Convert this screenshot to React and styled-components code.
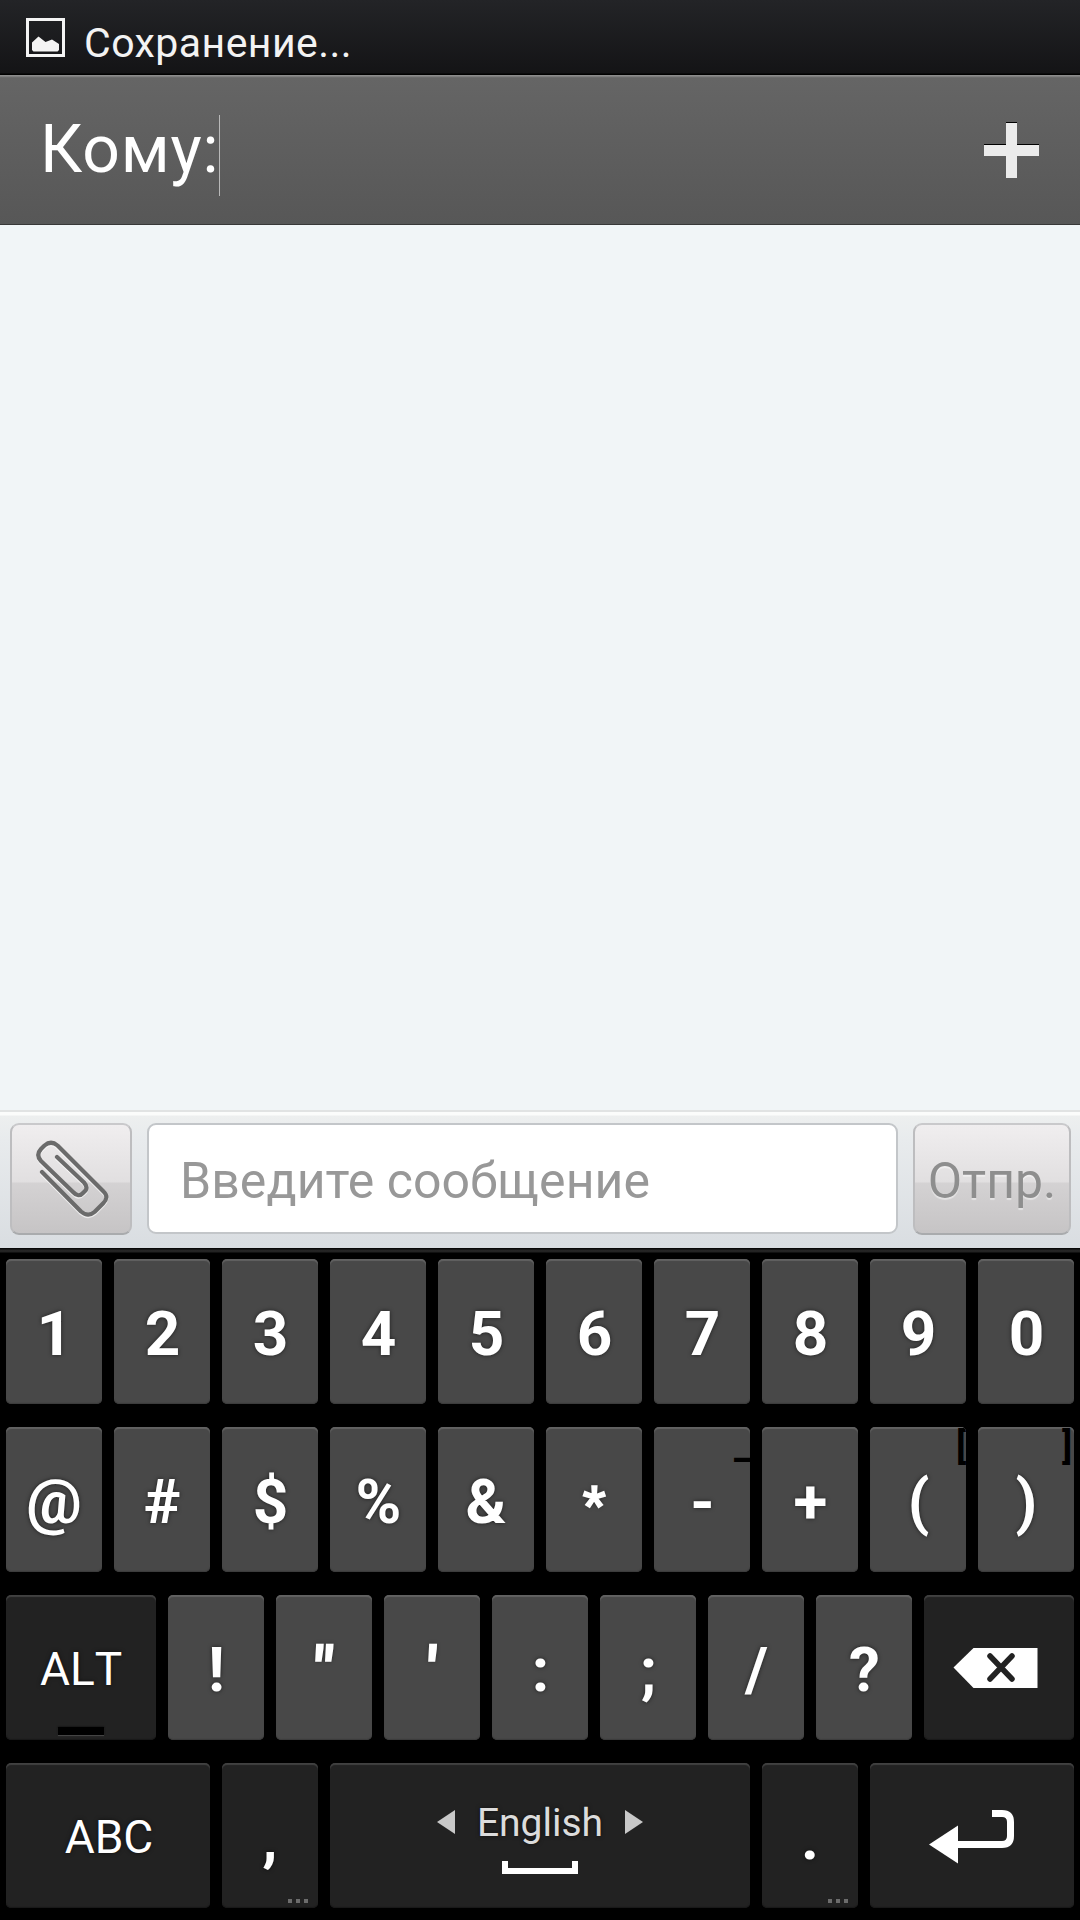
import React from 'react';
import styled, { createGlobalStyle } from 'styled-components';

const GlobalStyle = createGlobalStyle`
  * { box-sizing: border-box; }
  body { margin: 0; background: #000; }
`;

const Screen = styled.div`
  width: 1080px;
  height: 1920px;
  display: flex;
  flex-direction: column;
  overflow: hidden;
  background: #000;
  font-family: Roboto, 'Noto Sans', sans-serif;
`;

const StatusBar = styled.header`
  flex: none;
  height: 75px;
  display: flex;
  align-items: flex-start;
  padding: 18px 0 0 26px;
  background: linear-gradient(#232427, #141416 73px, #000 74px);
`;

const StatusText = styled.span`
  margin-left: 19px;
  color: #f3f3f3;
  font-size: 41px;
  line-height: 50px;
  letter-spacing: 0.45px;
`;

const RecipientBar = styled.section`
  flex: none;
  height: 150px;
  display: flex;
  align-items: center;
  justify-content: space-between;
  padding: 0 41px 0 40px;
  background: linear-gradient(#8b8b8b 0, #8b8b8b 1px, #707070 2px, #656565 3px, #575757 149px, #383838 149px);
`;

const RecipientField = styled.div`
  display: flex;
  align-items: center;
  height: 81px;
  margin-top: 11px;
  color: #fff;
  font-size: 66px;
  line-height: 70px;
  letter-spacing: 0.8px;
`;

const RecipientText = styled.span`
  display: block;
  height: 81px;
`;

const Caret = styled.i`
  width: 1px;
  height: 81px;
  background: #b9b9b9;
`;

const Conversation = styled.main`
  flex: 1;
  background: #f1f5f7;
`;

const Composer = styled.section`
  flex: none;
  height: 138px;
  display: flex;
  gap: 15px;
  padding: 13px 9px 0 10px;
  background: linear-gradient(#e1e3e3 0, #e1e3e3 2px, #fbfcfb 2px, #fbfcfb 5px, #edefef 6px, #e8ebed 30px, #d9dde1);
`;

const ComposerButton = styled.button`
  flex: none;
  width: ${(p) => p.$width}px;
  height: 112px;
  margin: 0;
  padding: ${(p) => p.$padding || 0};
  display: flex;
  align-items: center;
  justify-content: center;
  border: 2px solid;
  border-color: #c9c9cb #bdbdbf #a9abad;
  border-radius: 9px;
  background: linear-gradient(#f0eeef 0, #e1dfe0 57px, #d4d2d3 58px, #c6c4c5 100%);
  color: #8e8e8e;
  font: 400 50px/60px Roboto, 'Noto Sans', sans-serif;
  text-shadow: 0 2px 1px rgba(255, 255, 255, 0.45);
`;

const MessageField = styled.div`
  flex: 1;
  height: 111px;
  padding-left: 31px;
  border: 2px solid #c3c6c9;
  border-radius: 9px;
  background: #fff;
  color: #989898;
  font-size: 50px;
  line-height: 113px;
  letter-spacing: 0.05px;
  white-space: nowrap;
`;

const Keyboard = styled.section`
  flex: none;
  height: 672px;
  display: flex;
  flex-direction: column;
  gap: 23px;
  padding: 11px 6px 0;
  background: linear-gradient(#080808 0, #080808 1px, #252525 2px, #222 4px, #000 5px);
`;

const KeyRow = styled.div`
  display: flex;
  gap: 12px;
`;

const Key = styled.div`
  position: relative;
  flex: none;
  width: ${(p) => p.$width || 96}px;
  height: 145px;
  border-radius: 5px;
  overflow: hidden;
  background: ${(p) => (p.$dark ? '#222' : '#484848')};
  box-shadow: inset 0 2px 1px ${(p) => (p.$dark ? '#414141' : '#626262')},
    inset 0 -1px 1px ${(p) => (p.$dark ? '#191919' : '#3b3b3b')};
  color: #fff;
  text-align: center;
  text-shadow: 0 0 4px rgba(0, 0, 0, 0.6);
`;

const Glyph = styled.span`
  display: block;
  padding-left: ${(p) => (p.$centered ? 0 : 1)}px;
  font-size: ${(p) => p.$size || 62}px;
  font-weight: 700;
  line-height: ${(p) => p.$line || 150}px;
  -webkit-text-stroke: ${(p) => p.$stroke || 0}px #fff;
`;

const QuoteGlyph = styled(Glyph)`
  padding: 0 1px 0 0;
  transform: skewX(-3deg);
`;

const ModeLabel = styled.span`
  display: block;
  padding-left: ${(p) => p.$shift || 0}px;
  font-size: 46px;
  font-kerning: none;
  line-height: 149px;
`;

const CornerHint = styled.span`
  position: absolute;
  top: ${(p) => p.$top}px;
  left: ${(p) => p.$left}px;
  color: #000;
  font-size: ${(p) => p.$size}px;
  font-weight: 700;
  line-height: 46px;
  text-shadow: none;
`;

const AltLight = styled.i`
  position: absolute;
  left: 52px;
  bottom: 5px;
  width: 46px;
  height: 8px;
  background: #000;
  box-shadow: 0 1px 1px #444, 0 0 2px #000;
`;

const MoreDots = styled.i`
  position: absolute;
  right: 10px;
  bottom: 5px;
  display: flex;
  gap: 4px;

  &::before,
  &::after,
  & > b {
    content: '';
    width: 4px;
    height: 4px;
    background: #6c6c6c;
  }
`;

const SpaceContent = styled.div`
  height: 145px;
  display: flex;
  flex-direction: column;
  align-items: center;
  padding-top: 34px;
`;

const Language = styled.div`
  display: flex;
  align-items: center;
  gap: 22px;
`;

const LanguageName = styled.span`
  padding-top: 3px;
  color: #dcdcdc;
  font-size: 39px;
  line-height: 46px;
`;

const SpaceMark = styled.i`
  width: 76px;
  height: 13px;
  margin-top: 15px;
  border: solid #fff;
  border-width: 0 6px 6px;
`;

const KeyIcon = styled.div`
  height: 145px;
  display: flex;
  align-items: flex-start;
  justify-content: center;
  padding: ${(p) => p.$top}px ${(p) => p.$right || 0}px 0 0;
`;

const PictureIcon = () => (
  <svg width="39" height="39" viewBox="0 0 39 39">
    <rect x="1.5" y="1.5" width="36" height="36" fill="none" stroke="#f4f4f4" strokeWidth="3" />
    <path d="M6 32V24.500L12.500 18.500L19.500 24L26 21.500L33 26V32L31.500 33.500H7.500Z" fill="#f4f4f4" />
  </svg>
);

const PlusIcon = () => (
  <svg width="55" height="57" viewBox="0 0 55 57" shapeRendering="crispEdges">
    <path d="M22 0H33V22H55V24H0V22H22Z" fill="#000" />
    <path d="M22 1H33V23H55V34H33V56H22V34H0V23H22Z" fill="#ebebeb" />
  </svg>
);

const clipPath =
  'M5 31L44 70.500Q51 76.500 57.500 71L66 62.500Q72.500 56 66.500 50.500L20.500 4.500Q14 -1 7.500 4.500L4 8Q-1.500 14 4 20L36 51Q41.500 57 46 52L48.500 49.500Q51 46 47 41.500L20 16';

const PaperclipIcon = () => (
  <svg width="76" height="80" viewBox="-2 -2 76 80" fill="none" strokeLinecap="round" strokeLinejoin="round">
    <path d={clipPath} transform="translate(0 1.5)" stroke="#fff" strokeOpacity=".65" strokeWidth="4" />
    <path d={clipPath} stroke="#6b6b6b" strokeWidth="4.200" />
  </svg>
);

const BackspaceIcon = () => (
  <svg width="85" height="42" viewBox="0 0 85 42">
    <path d="M0.500 20.500L20.500 1H84.500V41H20.500Z" fill="#fff" />
    <path d="M37 9L59 32M59 9L37 32" stroke="#222" strokeWidth="5.500" strokeLinecap="round" />
  </svg>
);

const EnterIcon = () => (
  <svg width="86" height="56" viewBox="0 0 86 56">
    <path d="M63 4.500H73Q81.500 4.500 81.500 13V27Q81.500 35.500 73 35.500H28" fill="none" stroke="#fff" strokeWidth="7" />
    <path d="M0 35.500L29 16.500V54.500Z" fill="#fff" />
  </svg>
);

const Arrow = ({ right }) => (
  <svg width="18" height="26" viewBox="0 0 18 26">
    <path d={right ? 'M0 1L18 13L0 25Z' : 'M18 1L0 13L18 25Z'} fill="#c9c9c9" />
  </svg>
);

const digits = ['1', '2', '3', '4', '5', '6', '7', '8', '9', '0'];
const symbols = [
  { glyph: '@', centered: true },
  { glyph: '#', centered: true },
  { glyph: '$' },
  { glyph: '%' },
  { glyph: '&', centered: true },
  { glyph: '*', size: 50, line: 157, stroke: 1.5, centered: true },
  { glyph: '-', hint: '_', top: -5, left: 80, hintSize: 39 },
  { glyph: '+' },
  { glyph: '(', hint: '[', top: -3, left: 86, hintSize: 37 },
  { glyph: ')', hint: ']', top: -3, left: 84, hintSize: 37 },
];
const punctuation = ['!', '"', "'", ':', ';', '/', '?'];
const quotes = ['"', "'"];

export default function App() {
  return (
    <Screen>
      <GlobalStyle />
      <StatusBar>
        <PictureIcon />
        <StatusText>Сохранение...</StatusText>
      </StatusBar>
      <RecipientBar>
        <RecipientField>
          <RecipientText>Кому:</RecipientText>
          <Caret />
        </RecipientField>
        <PlusIcon />
      </RecipientBar>
      <Conversation />
      <Composer>
        <ComposerButton $width={122} $padding="0 0 0 4px" aria-label="Прикрепить">
          <PaperclipIcon />
        </ComposerButton>
        <MessageField>Введите сообщение</MessageField>
        <ComposerButton $width={158} $padding="4px 0 0">
          Отпр.
        </ComposerButton>
      </Composer>
      <Keyboard>
        <KeyRow>
          {digits.map((d) => (
            <Key key={d}>
              <Glyph>{d}</Glyph>
            </Key>
          ))}
        </KeyRow>
        <KeyRow>
          {symbols.map((s) => (
            <Key key={s.glyph}>
              <Glyph $size={s.size} $line={s.line} $stroke={s.stroke} $centered={s.centered}>
                {s.glyph}
              </Glyph>
              {s.hint && (
                <CornerHint $top={s.top} $left={s.left} $size={s.hintSize}>
                  {s.hint}
                </CornerHint>
              )}
            </Key>
          ))}
        </KeyRow>
        <KeyRow>
          <Key $dark $width={150}>
            <ModeLabel>ALT</ModeLabel>
            <AltLight />
          </Key>
          {punctuation.map((p) => (
            <Key key={p}>
              {quotes.includes(p) ? <QuoteGlyph $stroke={1.5}>{p}</QuoteGlyph> : <Glyph>{p}</Glyph>}
            </Key>
          ))}
          <Key $dark $width={150}>
            <KeyIcon $top={52} $right={8}>
              <BackspaceIcon />
            </KeyIcon>
          </Key>
        </KeyRow>
        <KeyRow>
          <Key $dark $width={204}>
            <ModeLabel $shift={2}>ABC</ModeLabel>
          </Key>
          <Key $dark>
            <Glyph $centered>,</Glyph>
            <MoreDots>
              <b />
            </MoreDots>
          </Key>
          <Key $dark $width={420}>
            <SpaceContent>
              <Language>
                <Arrow />
                <LanguageName>English</LanguageName>
                <Arrow right />
              </Language>
              <SpaceMark />
            </SpaceContent>
          </Key>
          <Key $dark>
            <Glyph $centered>.</Glyph>
            <MoreDots>
              <b />
            </MoreDots>
          </Key>
          <Key $dark $width={204}>
            <KeyIcon $top={46}>
              <EnterIcon />
            </KeyIcon>
          </Key>
        </KeyRow>
      </Keyboard>
    </Screen>
  );
}
